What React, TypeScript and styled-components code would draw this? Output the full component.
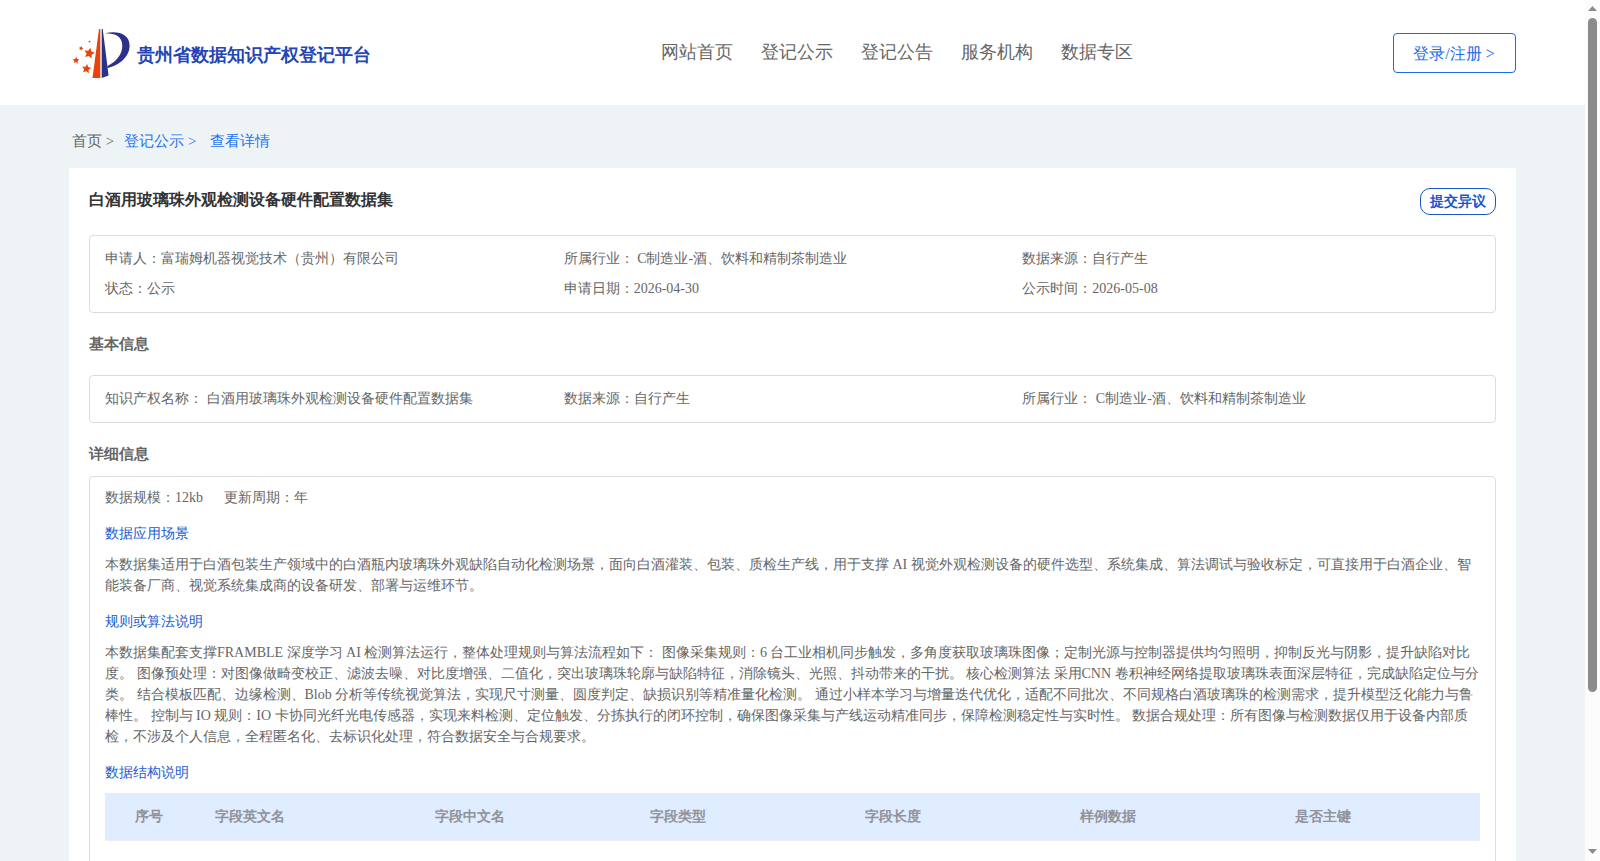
import React from 'react';
import styled, { createGlobalStyle } from 'styled-components';

const GlobalStyle = createGlobalStyle`
  * { box-sizing: border-box; }
  html, body { margin: 0; height: 100%; overflow: hidden; }
  body {
    font-family: "Liberation Serif", serif;
    font-size: 14px;
    line-height: 21px;
    color: #666;
  }
`;

const Window = styled.div`
  display: flex;
  height: 861px;
  overflow: hidden;
`;

const Page = styled.div`
  flex: 1;
  min-width: 0;
  height: 861px;
  overflow: hidden;
  background: #eef3f6;
`;

const Header = styled.header`
  display: flex;
  align-items: center;
  justify-content: space-between;
  height: 105px;
  padding: 0 69px 0 72px;
  background: #fff;
`;

const Brand = styled.div`
  display: flex;
  align-items: center;
  gap: 6px;
  width: 588.5px;
`;

const BrandName = styled.span`
  padding-top: 4px;
  font-size: 18px;
  font-weight: 700;
  line-height: 26px;
  color: #2446b4;
  white-space: nowrap;
`;

const Nav = styled.nav`
  display: flex;
  flex: 1;
  gap: 28px;
  padding-bottom: 2px;
  font-size: 18px;
  line-height: 26px;
`;

const LoginButton = styled.button`
  width: 123px;
  height: 40px;
  margin-top: 1px;
  padding: 0 1px 0 0;
  border: 1px solid #1a6cea;
  border-radius: 4px;
  background: #fff;
  font: inherit;
  font-size: 16px;
  color: #1a6cea;
`;

const Breadcrumb = styled.div`
  display: flex;
  height: 63px;
  padding: 25px 72px 0;
  font-size: 15px;
  line-height: 22px;
`;

const Crumb = styled.span<{ $active?: boolean; $gap?: number }>`
  margin-right: ${(p) => p.$gap ?? 0}px;
  color: ${(p) => (p.$active ? '#1f73f0' : '#666')};
`;

const Card = styled.main`
  width: 1447px;
  height: 900px;
  margin-left: 69px;
  padding: 20px;
  background: #fff;
`;

const TitleRow = styled.div`
  display: flex;
  align-items: flex-start;
  justify-content: space-between;
  height: 47px;
`;

const Title = styled.h1`
  margin: 0;
  font-size: 16px;
  line-height: 24px;
  color: #333;
`;

const ObjectionButton = styled.button`
  width: 76px;
  height: 27px;
  padding: 0;
  border: 1px solid #1a56c8;
  border-radius: 10px;
  background: #fff;
  font: inherit;
  font-weight: 700;
  color: #1a56c8;
`;

const InfoBox = styled.section`
  display: grid;
  grid-template-columns: repeat(3, 1fr);
  grid-auto-rows: 30px;
  padding: 8px 14px 8px 15px;
  border: 1px solid #ddd;
  border-radius: 4px;
  line-height: 30px;
`;

const SectionTitle = styled.h2<{ $height: number }>`
  height: ${(p) => p.$height}px;
  margin: 0;
  padding-top: 20px;
  font-size: 15px;
  line-height: 22px;
`;

const DetailBox = styled.section`
  height: 500px;
  padding: 10px 15px;
  border: 1px solid #ddd;
  border-radius: 4px;
`;

const Facts = styled.div`
  display: flex;
  gap: 21px;
`;

const SubTitle = styled.h3`
  margin: 15px 0 10px;
  font-size: 14px;
  font-weight: 400;
  line-height: 21px;
  color: #1a5bd0;
`;

const Line = styled.div`
  height: 21px;
  white-space: nowrap;
`;

const TableHead = styled.div`
  display: grid;
  grid-template-columns: 80px 220px repeat(4, 215px) 1fr;
  height: 48px;
  padding-left: 30px;
  border-bottom: 1px solid #ebeef5;
  background: #e0ecff;
  font-weight: 700;
  line-height: 47px;
  color: #909399;
`;

const ScrollTrack = styled.div`
  display: flex;
  flex-direction: column;
  align-items: center;
  justify-content: space-between;
  width: 15px;
  height: 861px;
  padding: 6px 0 7px;
  background: #fcfcfc;
`;

const ScrollThumb = styled.div`
  width: 9px;
  height: 674px;
  margin: 7px 0 auto;
  border-radius: 5px;
  background: #8b8b8b;
`;

const star = (cx: number, cy: number, r: number, turn: number) =>
  Array.from({ length: 10 }, (_, i) => {
    const a = ((turn - 90 + i * 36) * Math.PI) / 180;
    const d = i % 2 ? r * 0.48 : r;
    return `${(cx + d * Math.cos(a)).toFixed(2)},${(cy + d * Math.sin(a)).toFixed(2)}`;
  }).join(' ');

const LogoMark = styled.svg`
  margin-top: 2px;
`;

const Logo = () => (
  <LogoMark width="59" height="50" viewBox="0 0 59 50">
    <g fill="#e8430e">
      <path d="M27 0 L28.3 0 L28.3 49 L20.5 49 Z" />
      <polygon points={star(17.3, 24.3, 5.6, 12)} />
      <polygon points={star(4, 31.4, 3.6, 5)} />
      <polygon points={star(14.5, 39.8, 4.9, 8)} />
      <polygon points={star(9, 19.4, 2.3, 25)} />
      <polygon points={star(17.6, 12.6, 1.4, 10)} />
    </g>
    <g fill="#2b3088">
      <path d="M29.7 0 L30.7 0 L36.6 46.4 L29.7 49 Z" />
      <path d="M33 4.3 C45 1.2 57.5 4.5 57.6 16.5 C57.6 28 47 36.5 35.5 39 L35.2 37.2 C44.5 32.5 50.4 25 50.3 16.7 C50.2 7.5 43.5 4.2 33 4.3 Z" />
    </g>
  </LogoMark>
);

const nav = ['网站首页', '登记公示', '登记公告', '服务机构', '数据专区'];

const summary = [
  '申请人：富瑞姆机器视觉技术（贵州）有限公司',
  '所属行业： C制造业-酒、饮料和精制茶制造业',
  '数据来源：自行产生',
  '状态：公示',
  '申请日期：2026-04-30',
  '公示时间：2026-05-08',
];

const basics = [
  '知识产权名称： 白酒用玻璃珠外观检测设备硬件配置数据集',
  '数据来源：自行产生',
  '所属行业： C制造业-酒、饮料和精制茶制造业',
];

const scenario = [
  '本数据集适用于白酒包装生产领域中的白酒瓶内玻璃珠外观缺陷自动化检测场景，面向白酒灌装、包装、质检生产线，用于支撑 AI 视觉外观检测设备的硬件选型、系统集成、算法调试与验收标定，可直接用于白酒企业、智',
  '能装备厂商、视觉系统集成商的设备研发、部署与运维环节。',
];

const rules = [
  '本数据集配套支撑FRAMBLE 深度学习 AI 检测算法运行，整体处理规则与算法流程如下： 图像采集规则：6 台工业相机同步触发，多角度获取玻璃珠图像；定制光源与控制器提供均匀照明，抑制反光与阴影，提升缺陷对比',
  '度。 图像预处理：对图像做畸变校正、滤波去噪、对比度增强、二值化，突出玻璃珠轮廓与缺陷特征，消除镜头、光照、抖动带来的干扰。 核心检测算法 采用CNN 卷积神经网络提取玻璃珠表面深层特征，完成缺陷定位与分',
  '类。 结合模板匹配、边缘检测、Blob 分析等传统视觉算法，实现尺寸测量、圆度判定、缺损识别等精准量化检测。 通过小样本学习与增量迭代优化，适配不同批次、不同规格白酒玻璃珠的检测需求，提升模型泛化能力与鲁',
  '棒性。 控制与 IO 规则：IO 卡协同光纤光电传感器，实现来料检测、定位触发、分拣执行的闭环控制，确保图像采集与产线运动精准同步，保障检测稳定性与实时性。 数据合规处理：所有图像与检测数据仅用于设备内部质',
  '检，不涉及个人信息，全程匿名化、去标识化处理，符合数据安全与合规要求。',
];

const columns = ['序号', '字段英文名', '字段中文名', '字段类型', '字段长度', '样例数据', '是否主键'];

export default function App() {
  return (
    <Window>
      <GlobalStyle />
      <Page>
        <Header>
          <Brand>
            <Logo />
            <BrandName>贵州省数据知识产权登记平台</BrandName>
          </Brand>
          <Nav>{nav.map((n) => <span key={n}>{n}</span>)}</Nav>
          <LoginButton>登录/注册 &gt;</LoginButton>
        </Header>
        <Breadcrumb>
          <Crumb $gap={10}>首页 &gt;</Crumb>
          <Crumb $active $gap={13.5}>登记公示 &gt;</Crumb>
          <Crumb $active>查看详情</Crumb>
        </Breadcrumb>
        <Card>
          <TitleRow>
            <Title>白酒用玻璃珠外观检测设备硬件配置数据集</Title>
            <ObjectionButton>提交异议</ObjectionButton>
          </TitleRow>
          <InfoBox>{summary.map((s) => <span key={s}>{s}</span>)}</InfoBox>
          <SectionTitle $height={62}>基本信息</SectionTitle>
          <InfoBox>{basics.map((s) => <span key={s}>{s}</span>)}</InfoBox>
          <SectionTitle $height={53}>详细信息</SectionTitle>
          <DetailBox>
            <Facts>
              <span>数据规模：12kb</span>
              <span>更新周期：年</span>
            </Facts>
            <SubTitle>数据应用场景</SubTitle>
            {scenario.map((l) => <Line key={l}>{l}</Line>)}
            <SubTitle>规则或算法说明</SubTitle>
            {rules.map((l) => <Line key={l}>{l}</Line>)}
            <SubTitle>数据结构说明</SubTitle>
            <TableHead>{columns.map((c) => <span key={c}>{c}</span>)}</TableHead>
          </DetailBox>
        </Card>
      </Page>
      <ScrollTrack>
        <svg width="9" height="5" viewBox="0 0 9 5"><path d="M0 5 L4.5 0 L9 5 Z" fill="#8b8b8b" /></svg>
        <ScrollThumb />
        <svg width="9" height="5" viewBox="0 0 9 5"><path d="M0 0 L4.5 5 L9 0 Z" fill="#8b8b8b" /></svg>
      </ScrollTrack>
    </Window>
  );
}
